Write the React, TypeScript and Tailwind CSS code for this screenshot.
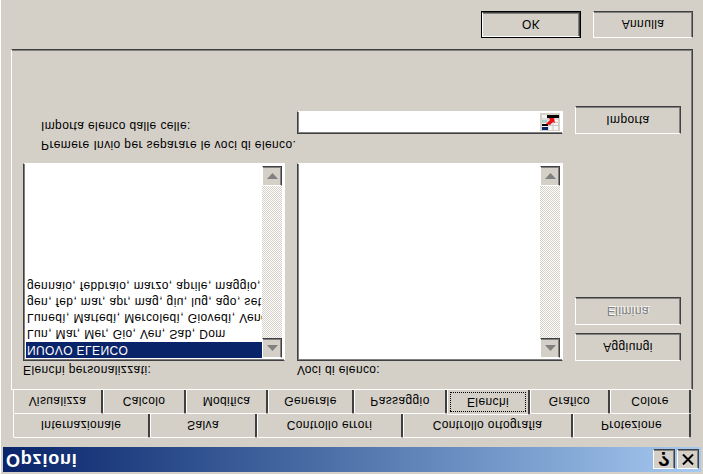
import React from 'react'

type BtnProps = {
    label: string;
    className?: string;
    disabled?: boolean;
    def?: boolean;
}

// raised win9x edge
const raised = 'border border-t-white border-l-white border-r-[#404040] border-b-[#404040] shadow-[inset_-1px_-1px_0_#808080]'
const sunken = 'border border-t-[#404040] border-l-[#404040] border-r-white border-b-white shadow-[inset_1px_1px_0_#808080]'

function Btn({ label, className, disabled, def }: BtnProps) {
    if (def) {
        return (
            <div className={`border border-black ${className}`}>
                <div className={`h-full flex items-center justify-center ${raised}`}>{label}</div>
            </div>
        )
    }
    return (
        <div className={`flex items-center justify-center ${raised} ${disabled ? 'text-[#808080] [text-shadow:1px_1px_0_#ffffff]' : ''} ${className}`}>{label}</div>
    )
}

function Tab({ label, width, active }: { label: string; width: string; active?: boolean }) {
    if (active) {
        return (
            <div className={`${width} h-[25px] -mt-[1px] shrink-0 flex items-center justify-center p-[2px] border-t border-l border-t-white border-l-white border-r-2 border-r-[#404040] rounded-t-[2px] relative z-10 bg-[#d4d0c8]`}>
                <div className="w-full h-full border border-dotted border-black flex items-center justify-center">{label}</div>
            </div>
        )
    }
    return (
        <div className={`${width} shrink-0 h-full flex items-center justify-center border-t border-l border-t-white border-l-white border-r-2 border-r-[#404040] rounded-t-[2px]`}>{label}</div>
    )
}

function Arrow({ up }: { up?: boolean }) {
    return (
        <div className={`h-[20px] shrink-0 flex items-center justify-center bg-[#d4d0c8] ${raised}`}>
            <svg width="11" height="6" viewBox="0 0 11 6">
                <path d={up ? 'M5.5 0 L11 6 L0 6 Z' : 'M0 0 L11 0 L5.5 6 Z'} fill="#808080" />
            </svg>
        </div>
    )
}

function ListBox({ items, width }: { items: string[]; width: string }) {
    return (
        <div className={`${width} h-[198px] flex p-[2px] bg-white ${sunken}`}>
            <div className="flex-1 min-w-0 overflow-hidden">
                {items.map((t, i) => (
                    <div key={t} className={`h-[16px] leading-[16px] pl-[1px] whitespace-nowrap ${i === 0 ? 'bg-[#0a246a] text-white' : ''}`}>{t}</div>
                ))}
            </div>
            <div className="w-[20px] flex flex-col justify-between bg-[repeating-conic-gradient(#d4d0c8_0_25%,#ffffff_0_50%)] bg-[length:2px_2px]">
                <Arrow up />
                <Arrow />
            </div>
        </div>
    )
}

export default function App() {
    return (
        <div className="w-[703px] h-[475px] overflow-hidden -scale-y-100 bg-[#d4d0c8] text-black font-['Liberation_Sans',sans-serif] text-[12px] tracking-[0.38px] border-t border-l border-white border-r-[#808080] border-b-[#808080] px-[2px] pt-[2px]">
            <div className="h-[25px] flex items-center justify-between pl-[3px] pr-[2px] bg-gradient-to-r from-[#0a246a] to-[#a6caf0]">
                <span className="text-white font-bold text-[18px] tracking-[0.8px]">Opzioni</span>
                <div className="flex gap-[2px]">
                    <div className={`w-[22px] h-[20px] flex items-center justify-center bg-[#d4d0c8] font-bold text-[20px] ${raised}`}>?</div>
                    <div className={`w-[22px] h-[20px] flex items-center justify-center bg-[#d4d0c8] ${raised}`}>
                        <svg width="12" height="11" viewBox="0 0 12 11">
                            <path d="M1 0.5 L11 10.5 M11 0.5 L1 10.5" stroke="#000" strokeWidth="2" />
                        </svg>
                    </div>
                </div>
            </div>

            <div className="ml-[10px] w-[680px] mt-[9px] h-[24px] flex">
                <Tab label="Internazionale" width="w-[137px]" />
                <Tab label="Salva" width="w-[107px]" />
                <Tab label="Controllo errori" width="w-[146px]" />
                <Tab label="Controllo ortografia" width="w-[170px]" />
                <Tab label="Protezione" width="w-[118px]" />
            </div>
            <div className="ml-[10px] w-[680px] h-[24px] flex">
                <Tab label="Visualizza" width="w-[90px]" />
                <Tab label="Calcolo" width="w-[83px]" />
                <Tab label="Modifica" width="w-[82px]" />
                <Tab label="Generale" width="w-[86px]" />
                <Tab label="Passaggio" width="w-[93px]" />
                <Tab label="Elenchi" width="w-[83px]" active />
                <Tab label="Grafico" width="w-[80px]" />
                <Tab label="Colore" width="w-[81px]" />
            </div>

            <div className={`ml-[8px] w-[682px] h-[341px] px-[11px] pt-[10px] ${raised}`}>
                <div className="flex gap-[12px]">
                    <div className="w-[262px]">Elenchi personalizzati:</div>
                    <div>Voci di elenco:</div>
                </div>
                <div className="flex">
                    <ListBox width="w-[262px]" items={[
                        'NUOVO ELENCO',
                        'Lun, Mar, Mer, Gio, Ven, Sab, Dom',
                        'Lunedì, Martedì, Mercoledì, Giovedì, Venerdì, Sabato, Domenica',
                        'gen, feb, mar, apr, mag, giu, lug, ago, set, ott, nov, dic',
                        'gennaio, febbraio, marzo, aprile, maggio, giugno, luglio',
                    ]} />
                    <div className="w-[12px]" />
                    <ListBox width="w-[266px]" items={[]} />
                    <div className="w-[12px]" />
                    <div className="flex flex-col">
                        <Btn label="Aggiungi" className="w-[106px] h-[28px]" />
                        <Btn label="Elimina" className="w-[106px] h-[28px] mt-[8px]" disabled />
                    </div>
                </div>
                <div className="pl-[18px] mt-[9px]">Premere Invio per separare le voci di elenco.</div>
                <div className="flex items-start mt-[2px]">
                    <div className="w-[274px] pl-[18px] -mt-[1px]">Importa elenco dalle celle:</div>
                    <div className={`w-[266px] h-[23px] bg-white flex justify-end items-start p-[2px] ${sunken}`}>
                        {/* range picker, drawn upright: the whole page gets flipped */}
                        <svg width="20" height="18" viewBox="0 0 20 18">
                            <rect width="20" height="18" fill="#d4d0c8" />
                            <rect x="2" y="1" width="16" height="15" fill="#f4f4f4" />
                            <path d="M8 1 V16 M13 1 V16 M2 5.5 H18 M2 8.5 H18 M2 12 H18" stroke="#c8c8c8" strokeWidth="1" />
                            <rect x="2" y="1" width="6" height="3" fill="#0a246a" />
                            <rect x="2" y="5" width="6" height="2" fill="#000" />
                            <rect x="2" y="9" width="5" height="2" fill="#9fd0d0" />
                            <rect x="7" y="13" width="12" height="3" fill="#000" />
                            <path d="M6 7 L10 6 L13 9 L15 8 L14 13 L9 13 L10 11 Z" fill="#ee1111" />
                        </svg>
                    </div>
                    <Btn label="Importa" className="w-[106px] h-[28px] ml-[12px]" />
                </div>
            </div>

            <div className="flex justify-end gap-[12px] w-[690px] mt-[11px]">
                <Btn label="OK" def className="w-[100px] h-[27px]" />
                <Btn label="Annulla" className="w-[100px] h-[27px]" />
            </div>
        </div>
    )
}
